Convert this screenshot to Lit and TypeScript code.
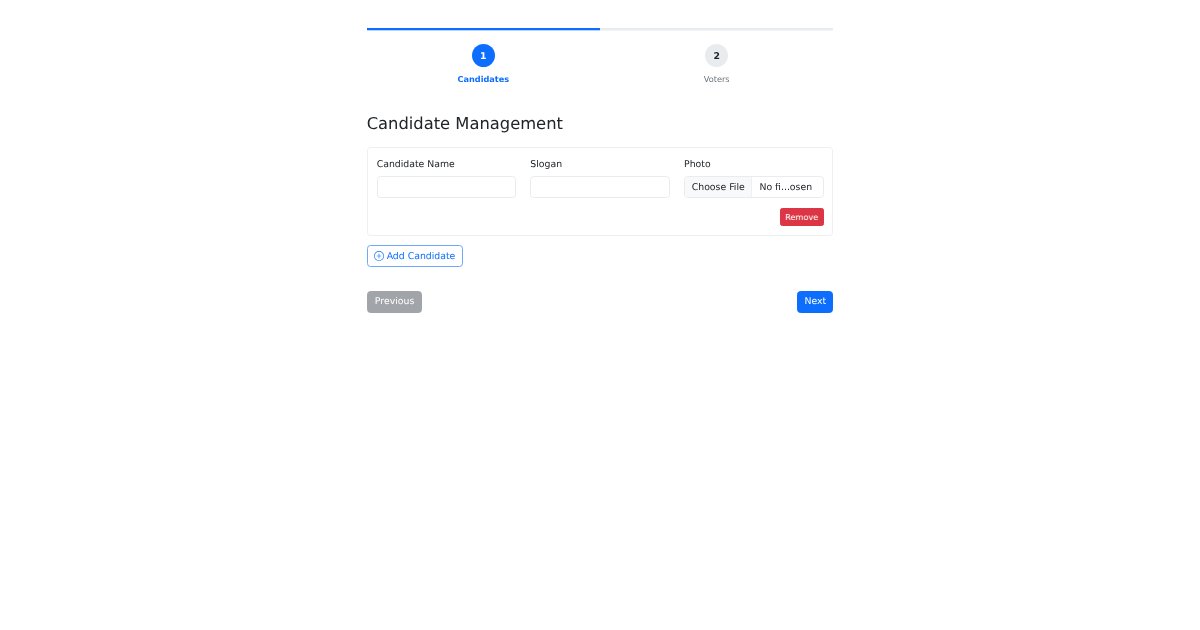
import { LitElement, html, css } from "lit";
import { customElement } from "lit/decorators.js";

@customElement("app-root")
export class AppRoot extends LitElement {
  static styles = css`
    :host { display: block; min-height: 630px; background: #fff; color: #212529; font-family: "DejaVu Sans", sans-serif; font-size: 9.33px; line-height: 1.5; text-rendering: geometricPrecision; }
    * { box-sizing: border-box; }
    .container { width: 466.67px; margin: 0 auto; padding-top: 28px; filter: blur(0.3px); }
    .progress { height: 2px; background: #e9ecef; box-shadow: 0 1px 0 #f3f5f6; }
    .progress-bar { width: 50%; height: 100%; background: #0d6efd; box-shadow: 0 1px 0 #b6d3fe; }
    .steps { display: flex; margin-top: 14px; margin-bottom: 29.2px; }
    .step { flex: 1; display: flex; flex-direction: column; align-items: center; }
    .circle { width: 23.33px; height: 23.33px; padding-top: 2px; border-radius: 50%; display: flex; align-items: center; justify-content: center; font-weight: 700; font-size: 9.33px; background: #e9ecef; color: #212529; }
    .step.active .circle { background: #0d6efd; color: #fff; }
    .step-label { font-size: 8.17px; line-height: 12.25px; margin-top: 5.4px; color: #6c757d; }
    .step.active .step-label { color: #0d6efd; font-weight: 700; }
    h3 { margin: 0 0 12.8px; font-size: 16.33px; line-height: 19.6px; font-weight: 500; color: #212529; }
    .card { border: 1px solid #eceef0; border-radius: 3.5px; padding: 10px 8.6px 9px 9px; }
    .fields { display: grid; grid-template-columns: repeat(3, 1fr); gap: 14px; }
    label { display: block; font-size: 9.33px; line-height: 14px; margin-bottom: 4px; color: #212529; }
    .control { height: 22.33px; border: 1px solid #e9ebee; border-radius: 3.5px; background: #fff; width: 100%; display: block; padding: 0; }
    .file { display: flex; align-items: center; overflow: hidden; }
    .file-btn { height: 100%; display: flex; align-items: center; padding: 2px 6.7px 0; background: #f8f9fa; border-right: 1px solid #eef0f2; }
    .file-name { padding: 2px 0 0 7px; white-space: nowrap; }
    .card-actions { display: flex; justify-content: flex-end; margin-top: 10px; }
    button { font-family: inherit; text-rendering: inherit; cursor: pointer; border: 1px solid transparent; border-radius: 3.5px; display: inline-flex; align-items: center; justify-content: center; }
    .remove { height: 18.27px; padding: 0.7px 4.5px 0; font-size: 8.17px; background: #dc3545; color: #fff; border-color: #dc3545; border-radius: 2.3px; }
    .add { margin-top: 9px; height: 22.33px; padding: 0 6.67px; font-size: 9.33px; background: #fff; color: #0d6efd; border-color: #6ea8fe; gap: 2.3px; }
    .add svg { width: 10px; height: 10px; display: block; }
    .nav { display: flex; justify-content: space-between; margin-top: 23.33px; }
    .nav button { height: 22.33px; font-size: 9.33px; color: #fff; }
    .prev { padding: 0 7.2px; background: #a1a5a9; border-color: #a1a5a9; }
    .next { padding: 0 6.2px; background: #0d6efd; border-color: #0d6efd; }
  `;

  render() {
    return html`
      <div class="container">
        <div class="progress"><div class="progress-bar"></div></div>
        <div class="steps">
          <div class="step active"><div class="circle">1</div><div class="step-label">Candidates</div></div>
          <div class="step"><div class="circle">2</div><div class="step-label">Voters</div></div>
        </div>
        <h3>Candidate Management</h3>
        <div class="card">
          <div class="fields">
            <div><label>Candidate Name</label><input class="control" type="text" /></div>
            <div><label>Slogan</label><input class="control" type="text" /></div>
            <div><label>Photo</label><div class="control file"><span class="file-btn">Choose File</span><span class="file-name">No fi...osen</span></div></div>
          </div>
          <div class="card-actions"><button class="remove">Remove</button></div>
        </div>
        <button class="add">
          <svg viewBox="0 0 16 16" fill="currentColor"><path d="M8 15A7 7 0 1 1 8 1a7 7 0 0 1 0 14zm0 1A8 8 0 1 0 8 0a8 8 0 0 0 0 16z"/><path d="M8 4a.5.5 0 0 1 .5.5v3h3a.5.5 0 0 1 0 1h-3v3a.5.5 0 0 1-1 0v-3h-3a.5.5 0 0 1 0-1h3v-3A.5.5 0 0 1 8 4z"/></svg>
          Add Candidate
        </button>
        <div class="nav"><button class="prev">Previous</button><button class="next">Next</button></div>
      </div>
    `;
  }
}
